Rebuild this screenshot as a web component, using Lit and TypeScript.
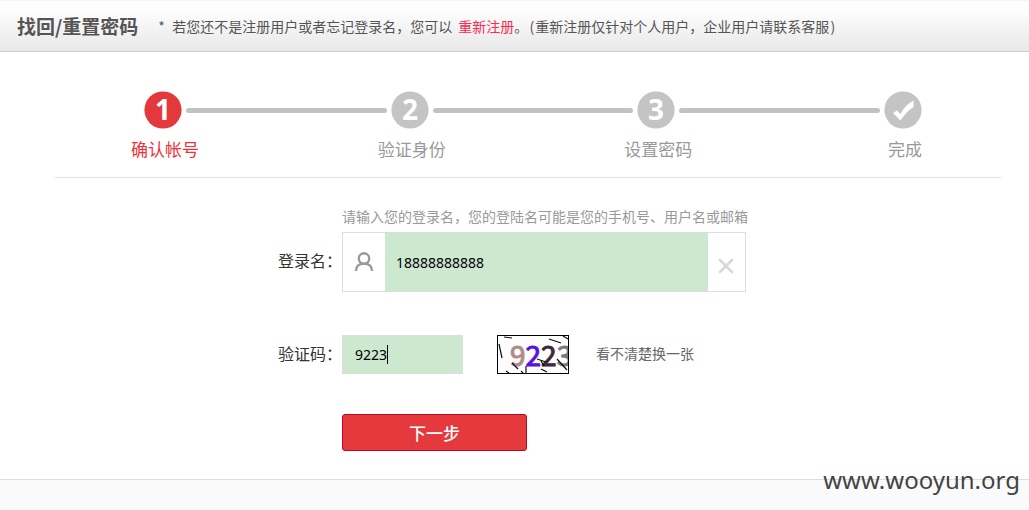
import { LitElement, html, css, svg } from "lit";
import { customElement, state } from "lit/decorators.js";

const STEPS = ["确认帐号", "验证身份", "设置密码", "完成"];

@customElement("step-bar")
class StepBar extends LitElement {
  static styles = css`
    :host {
      display: block;
    }
    .steps {
      display: flex;
      list-style: none;
      margin: 0;
      padding: 39px 79px 16px 89px;
      border-bottom: 1px solid #e4e4e4;
    }
    .step {
      flex: none;
      width: 38px;
      display: flex;
      flex-direction: column;
      align-items: center;
      color: #999;
    }
    .line {
      flex: 1;
      height: 5px;
      margin: 17px 4px 0;
      border-radius: 3px;
      background: #c2c2c2;
    }
    .dot {
      width: 38px;
      height: 38px;
      display: block;
      fill: #c4c4c4;
    }
    .num {
      fill: #fff;
      font: bold 28px "Noto Sans", sans-serif;
      text-anchor: middle;
    }
    .tick {
      fill: #fff;
    }
    .label {
      margin-top: 8px;
      padding-left: 4px;
      font-size: 17px;
      line-height: 24px;
      white-space: nowrap;
    }
    .current {
      color: #ee3239;
    }
    .current .dot {
      fill: #e4393c;
    }
  `;

  render() {
    return html`<ol class="steps">
      ${STEPS.map(
        (name, i) => html`${i ? html`<li class="line" role="presentation"></li>` : ""}
          <li class="step ${i === 0 ? "current" : ""}">
            <svg class="dot" viewBox="0 0 38 38" aria-hidden="true">
              <circle cx="19" cy="19" r="18.6" />
              ${i < 3
                ? svg`<text class="num" x="19" y="29">${i + 1}</text>`
                : svg`<path class="tick" d="M9 22 L13 19.5 L16.5 23 Q21 14 29.5 9.5 V16 Q22 21 16.5 29.5 Z" />`}
            </svg>
            <span class="label">${name}</span>
          </li>`
      )}
    </ol>`;
  }
}

@customElement("app-root")
class AppRoot extends LitElement {
  @state() private login = "18888888888";
  @state() private code = "9223";

  static styles = css`
    :host {
      display: flex;
      flex-direction: column;
      min-height: 100vh;
      position: relative;
      background: #fff;
      color: #333;
      font-family: "Noto Sans CJK SC", sans-serif;
      font-size: 14px;
      line-height: 20px;
    }
    * {
      box-sizing: border-box;
    }
    .head {
      display: flex;
      align-items: center;
      gap: 20px;
      height: 52px;
      padding: 0 17px;
      border-top: 1px solid #f4f4f4;
      border-bottom: 1px solid #ccc;
      background: linear-gradient(#fff, #fdfdfd 20%, #e8e8e8);
      color: #555;
      white-space: nowrap;
    }
    .title {
      margin: 0;
      font-size: 19px;
      line-height: 24px;
      font-weight: 700;
    }
    .note {
      margin: 0;
      display: flex;
    }
    .star {
      width: 14px;
    }
    .note a {
      margin-left: 6px;
      color: #ff2850;
      text-decoration: none;
    }
    .paren {
      width: 7px;
      text-align: center;
    }
    .main {
      padding: 0 28px 28px 55px;
    }
    .form {
      display: grid;
      grid-template-columns: 64px 404px;
      align-items: center;
      margin: 28px 0 0 223px;
    }
    .hint {
      grid-column: 2;
      margin: 0;
      height: 26px;
      color: #999;
      white-space: nowrap;
    }
    .name {
      padding-bottom: 4px;
      font-size: 16px;
      line-height: 24px;
      white-space: nowrap;
    }
    .login {
      display: grid;
      grid-template-columns: 42px 1fr 37px;
      height: 60px;
      border: 1px solid #ddd;
    }
    .icon {
      width: 22px;
      height: 22px;
      place-self: center;
      fill: none;
      stroke: #999;
      stroke-width: 2.4;
    }
    .text {
      width: 100%;
      border: 0;
      margin: 0;
      padding: 0 11px;
      border-radius: 0;
      outline: 0;
      background: #cce8cf;
      color: #000;
      font: 14px "Noto Sans", sans-serif;
    }
    .clear {
      border: 0;
      padding: 8px 2px 0 0;
      background: none;
      display: grid;
      place-items: center;
    }
    .cross {
      width: 16px;
      height: 16px;
      stroke: #d8d8d8;
      stroke-width: 2.6;
      stroke-linecap: round;
    }
    .verify {
      display: flex;
      align-items: center;
      height: 39px;
    }
    .row {
      margin-top: 43px;
    }
    .codebox {
      position: relative;
      width: 121px;
      height: 39px;
    }
    .code {
      height: 39px;
      padding: 0 12px;
      border: 1px solid #ddd;
    }
    .caret {
      position: absolute;
      left: 45px;
      top: 10px;
      width: 1px;
      height: 19px;
      background: #000;
    }
    .captcha {
      width: 72px;
      height: 39px;
      margin: 0 27px 0 34px;
    }
    .digits {
      font: 28px "Noto Sans CJK SC", sans-serif;
    }
    .swap {
      padding-bottom: 4px;
      color: #666;
      text-decoration: none;
    }
    .next {
      grid-column: 2;
      width: 185px;
      height: 37px;
      margin-top: 40px;
      padding: 0;
      border: 1px solid #b50a22;
      border-radius: 3px;
      background: #e6393d;
      color: #fff;
      font: 500 17px "Noto Sans CJK SC", sans-serif;
    }
    .foot {
      flex: 1;
      border-top: 1px solid #ddd;
      background: #fafafa;
    }
    .mark {
      position: absolute;
      right: 9px;
      bottom: 13px;
      color: #444;
      font: 24px/34px "Noto Sans", sans-serif;
    }
  `;

  private onLogin(e: Event) {
    this.login = (e.target as HTMLInputElement).value;
  }

  private onCode(e: Event) {
    this.code = (e.target as HTMLInputElement).value;
  }

  render() {
    return html`
      <header class="head">
        <h1 class="title">找回/重置密码</h1>
        <p class="note">
          <span class="star">*</span>
          <span>若您还不是注册用户或者忘记登录名，您可以</span>
          <a href="#">重新注册</a>
          <span>。</span>
          <span class="paren">(</span>
          <span>重新注册仅针对个人用户，企业用户请联系客服</span>
          <span class="paren">)</span>
        </p>
      </header>
      <main class="main">
        <step-bar></step-bar>
        <form class="form" @submit=${(e: Event) => e.preventDefault()}>
          <p class="hint">请输入您的登录名，您的登陆名可能是您的手机号、用户名或邮箱</p>
          <label class="name" for="login">登录名：</label>
          <div class="login">
            <svg class="icon" viewBox="0 0 22 22" aria-hidden="true">
              <circle cx="11" cy="7.5" r="5.2" />
              <path d="M3 20 C3 15 6 12.6 11 12.6 S19 15 19 20" />
            </svg>
            <input id="login" class="text" .value=${this.login} @input=${this.onLogin} />
            <button class="clear" type="button" aria-label="清除" @click=${() => (this.login = "")}>
              <svg class="cross" viewBox="0 0 16 16"><path d="M2 2 L14 14 M14 2 L2 14" /></svg>
            </button>
          </div>
          <label class="name row" for="code">验证码：</label>
          <div class="verify row">
            <div class="codebox">
              <input id="code" class="text code" .value=${this.code} @input=${this.onCode} />
              <span class="caret"></span>
            </div>
            <svg class="captcha" viewBox="0 0 72 39">
              <rect width="72" height="39" fill="#fdfdfd" />
              <text class="digits" x="13" y="31"><tspan fill="#b08c88" stroke="#b08c88">9</tspan><tspan fill="#5a10e0" stroke="#5a10e0">2</tspan><tspan fill="#3c2838" stroke="#3c2838">2</tspan><tspan fill="#787888" stroke="#787888">3</tspan></text>
              <path
                d="M2 9 L5 23 M7 2 L15 3 M52 4 L64 8 M15 28 L21 34 M29 31 V38 M40 24 L49 27 M44 26 L47 31 M60 24 L70 35 M9 36 L12 38 M24 36 L26 38 M44 34 L50 37 M66 1 L71 4"
                stroke="#111" stroke-width="1.2" fill="none" />
              <rect x=".5" y=".5" width="71" height="38" fill="none" stroke="#000" />
            </svg>
            <a class="swap" href="#">看不清楚换一张</a>
          </div>
          <button class="next" type="submit">下一步</button>
        </form>
      </main>
      <footer class="foot"></footer>
      <div class="mark">www.wooyun.org</div>
    `;
  }
}
